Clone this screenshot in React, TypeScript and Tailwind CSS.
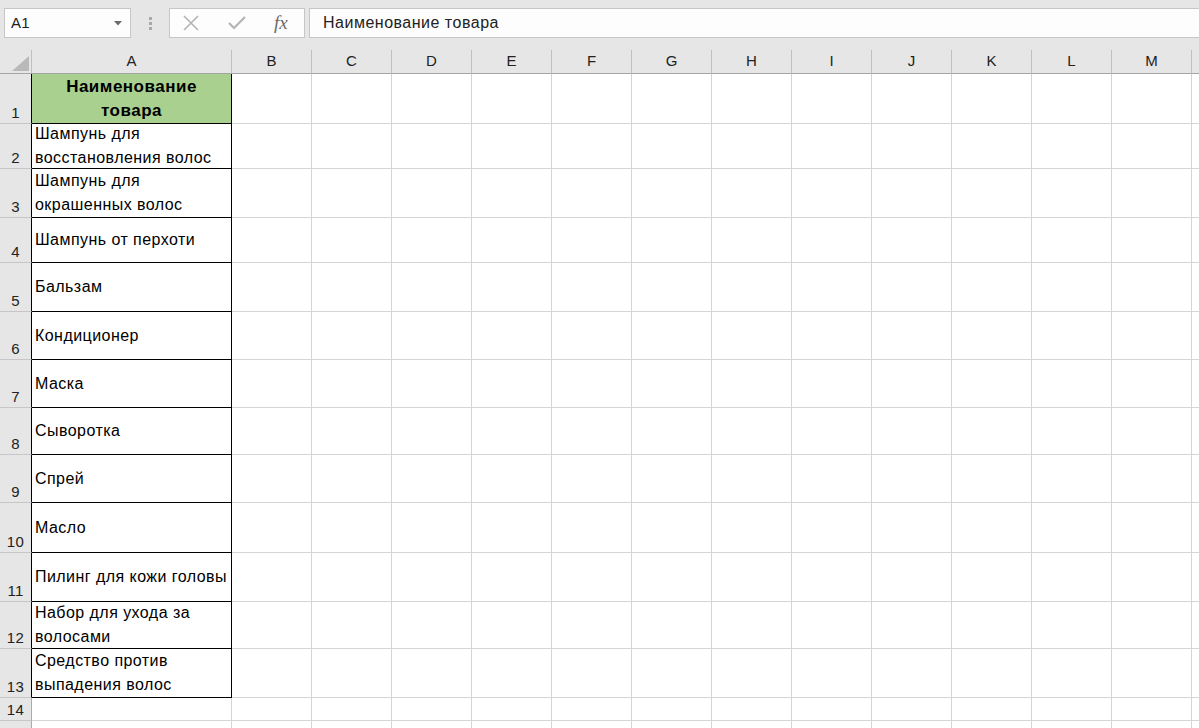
import React from "react";

const rows: { n: number; a: string[]; bold?: boolean }[] = [
  { n: 1, a: ["Наименование", "товара"], bold: true },
  { n: 2, a: ["Шампунь для", "восстановления волос"] },
  { n: 3, a: ["Шампунь для", "окрашенных волос"] },
  { n: 4, a: ["Шампунь от перхоти"] },
  { n: 5, a: ["Бальзам"] },
  { n: 6, a: ["Кондиционер"] },
  { n: 7, a: ["Маска"] },
  { n: 8, a: ["Сыворотка"] },
  { n: 9, a: ["Спрей"] },
  { n: 10, a: ["Масло"] },
  { n: 11, a: ["Пилинг для кожи головы"] },
  { n: 12, a: ["Набор для ухода за", "волосами"] },
  { n: 13, a: ["Средство против", "выпадения волос"] },
  { n: 14, a: [] },
  { n: 15, a: [] },
];

const cols = ["B", "C", "D", "E", "F", "G", "H", "I", "J", "K", "L", "M"];

const font = { fontFamily: '"Liberation Sans", Arial, sans-serif' };

export default function App() {
  return (
    <div className="w-[1199px] h-[728px] overflow-hidden bg-white text-black" style={font}>
      {/* Formula bar */}
      <div className="h-[50px] bg-[#e6e6e6] flex items-start pt-[8px]">
        <div className="ml-[4px] w-[127px] h-[30px] bg-[#fdfdfd] border border-[#c6c6c6] flex items-center justify-between pl-[6px] pr-[8px]">
          <span className="text-[15px] text-[#222] tracking-[0.3px]">A1</span>
          <svg width="8" height="5" viewBox="0 0 8 5">
            <polygon points="0,0 8,0 4,4.5" fill="#6a6a6a" />
          </svg>
        </div>
        <div className="w-[38px] h-[30px] flex flex-col items-center justify-center gap-[2px] pl-[1px]">
          <div className="w-[3px] h-[3px] bg-[#a9a9a9]" />
          <div className="w-[3px] h-[3px] bg-[#a9a9a9]" />
          <div className="w-[3px] h-[3px] bg-[#a9a9a9]" />
        </div>
        <div className="w-[136px] h-[30px] bg-[#fdfdfd] border border-[#c6c6c6] flex items-center">
          <svg width="16" height="16" viewBox="0 0 16 16" className="ml-[13px]">
            <path d="M1 1 L15 15 M15 1 L1 15" stroke="#b4b4b4" strokeWidth="1.6" fill="none" />
          </svg>
          <svg width="18" height="14" viewBox="0 0 18 14" className="ml-[29px]">
            <path d="M1 7 L6 12 L17 1" stroke="#b4b4b4" strokeWidth="2.2" fill="none" />
          </svg>
          <span
            className="ml-[28px] text-[19px] italic text-[#6a6a6a] leading-none -mt-[2px]"
            style={{ fontFamily: '"Liberation Serif", "Times New Roman", serif' }}
          >
            fx
          </span>
        </div>
        <div className="ml-[4px] flex-1 h-[30px] bg-[#fdfdfd] border border-[#c6c6c6] border-r-0 flex items-center pl-[13px]">
          <span className="text-[16px] text-[#222] tracking-[0.5px]">Наименование товара</span>
        </div>
      </div>

      {/* Grid */}
      <div className="grid grid-cols-[32px_200px_repeat(12,80px)_1fr] grid-rows-[24px_50px_45px_49px_45px_49px_48px_48px_47px_48px_50px_49px_47px_49px_23px_30px]">
        {/* header row */}
        <div className="relative bg-[#e6e6e6] border-r border-b border-r-[#c0c0c0] border-b-[#a5a5a5]">
          <svg width="17" height="15" viewBox="0 0 17 15" className="absolute left-[12px] top-[6px]">
            <polygon points="0,15 17,15 17,0" fill="#b9b9b9" />
          </svg>
        </div>
        <div className="bg-[#e6e6e6] border-r border-b border-r-[#c0c0c0] border-b-[#a5a5a5] flex items-center justify-center text-[15px] text-[#222]">
          A
        </div>
        {cols.map((c) => (
          <div
            key={c}
            className="bg-[#e6e6e6] border-r border-b border-r-[#c0c0c0] border-b-[#a5a5a5] flex items-center justify-center text-[15px] text-[#222]"
          >
            {c}
          </div>
        ))}
        <div className="bg-[#e6e6e6] border-b border-b-[#a5a5a5]" />

        {rows.map((r) => {
          const boxed = r.n <= 13;
          return (
            <React.Fragment key={r.n}>
              <div
                className={
                  boxed
                    ? "bg-[#e6e6e6] border-r border-b border-r-black border-b-[#c6c6c6] flex items-end justify-center text-[15px] leading-[20px] text-[#222] tracking-[0.3px]"
                    : "bg-[#e6e6e6] border-r border-b border-r-[#ababab] border-b-[#c6c6c6] flex items-end justify-center text-[15px] leading-[20px] text-[#222] tracking-[0.3px]"
                }
              >
                {r.n <= 14 ? r.n : null}
              </div>
              <div
                className={
                  r.bold
                    ? "bg-[#a9d08e] border-r border-b border-black flex flex-col justify-center items-center text-[17px] leading-[24px] font-bold tracking-[0.5px] whitespace-nowrap overflow-visible"
                    : boxed
                    ? "border-r border-b border-black flex flex-col justify-center pl-[3px] text-[16px] leading-[24px] tracking-[0.45px] whitespace-nowrap overflow-visible"
                    : "border-r border-b border-[#d4d4d4]"
                }
              >
                {r.a.map((t, i) => (
                  <span key={i}>{t}</span>
                ))}
              </div>
              {cols.map((c) => (
                <div key={c} className="border-r border-b border-[#d4d4d4]" />
              ))}
              <div className="border-b border-[#d4d4d4]" />
            </React.Fragment>
          );
        })}
      </div>
    </div>
  );
}
